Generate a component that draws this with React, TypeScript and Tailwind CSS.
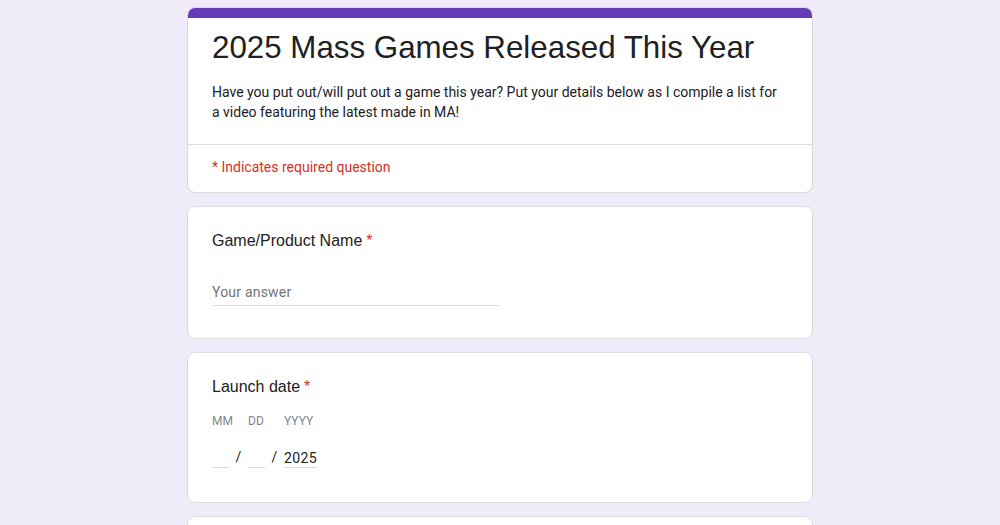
import React from 'react';

// Google-Forms-like header + questions
const Card = ({ children, className = '' }: { children: React.ReactNode; className?: string }) => (
    <div className={`bg-white border border-[#dadce0] rounded-lg ${className}`}>{children}</div>
);

const Req = () => <span className="text-[#d93025] ml-1">*</span>;

const DatePart = ({ label, value, w }: { label: string; value?: string; w: string }) => (
    <div className={`flex flex-col ${w}`}>
        <span className="text-[12px] leading-4 text-[#80868b] whitespace-nowrap">{label}</span>
        <div className="mt-[19px] h-[20px] border-b border-[#dadce0] text-[14px] leading-5 text-[#202124] tracking-wide">
            {value}
        </div>
    </div>
);

export default function App() {
    return (
        <div className="min-h-screen bg-[#efebf8] font-['Roboto',sans-serif]">
            <div className="w-[626px] mx-auto pt-[7px] flex flex-col gap-[13px]">
                <Card className="overflow-hidden">
                    <div className="h-[10px] bg-[#673ab7]" />
                    <div className="px-6 pt-[10px] pb-[22px]">
                        <h1 className="font-['Liberation_Sans',Arial,sans-serif] text-[31.3px] leading-[40px] text-[#202124]">
                            2025 Mass Games Released This Year
                        </h1>
                        <p className="mt-[15px] pr-[8px] text-[14px] leading-[19.5px] text-[#202124]">
                            Have you put out/will put out a game this year? Put your details below as I compile a list for a video featuring the latest made in MA!
                        </p>
                    </div>
                    <div className="border-t border-[#dadce0] px-6 pt-[10px] pb-[13px]">
                        <span className="text-[14px] leading-5 text-[#d93025]">* Indicates required question</span>
                    </div>
                </Card>

                <Card className="px-6 pt-[22px] pb-[32px]">
                    <div className="font-['Liberation_Sans',Arial,sans-serif] text-[16px] leading-6 text-[#202124]">
                        Game/Product Name<Req />
                    </div>
                    <div className="mt-[27px] w-[288px] h-[26px] border-b border-[#dadce0] text-[14px] leading-6 text-[#70757a] tracking-[0.2px]">
                        Your answer
                    </div>
                </Card>

                <Card className="px-6 pt-[22px] pb-[34px]">
                    <div className="font-['Liberation_Sans',Arial,sans-serif] text-[16px] leading-6 text-[#202124]">
                        Launch date<Req />
                    </div>
                    <div className="mt-[14px] flex items-start">
                        <DatePart label="MM" w="w-[17px]" />
                        <span className="mt-[34px] w-[19px] text-center text-[14px] text-[#202124]">/</span>
                        <DatePart label="DD" w="w-[17px]" />
                        <span className="mt-[34px] w-[19px] text-center text-[14px] text-[#202124]">/</span>
                        <DatePart label="YYYY" value="2025" w="w-[33px]" />
                    </div>
                </Card>

                <Card className="h-[120px]">{null}</Card>
            </div>
        </div>
    );
}
